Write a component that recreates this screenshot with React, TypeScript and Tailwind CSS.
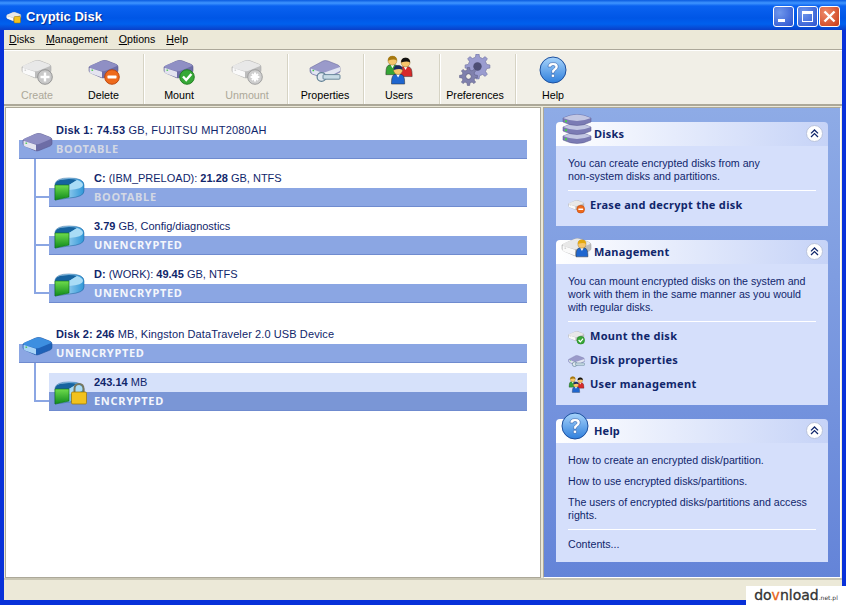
import React from 'react';

type Variant = 'purple' | 'gray' | 'blue';

const driveColors: Record<Variant, { top: string; side: string; front: string; edge: string }> = {
    purple: { top: '#8f8fc4', side: '#6d6da6', front: '#e4e4f0', edge: '#55558c' },
    gray: { top: '#e8e8e8', side: '#bdbdbd', front: '#fafafa', edge: '#a8a8a8' },
    blue: { top: '#3d8fe0', side: '#1f62b8', front: '#a9d4f7', edge: '#174f9c' },
};

// Isometric hard drive body, used by the toolbar and the tree
const DriveBody = ({ variant }: { variant: Variant }) => {
    const c = driveColors[variant];
    return (
        <g transform="translate(0 1.5) scale(1 0.88)">
            <path d="M1 13 L13 6.5 Q16 5 19 6 L28 10 Q30 11 30 13 L30 17 Q30 19 28 20 L17 25 Q15 26 13 25 L3 20 Q1 19 1 17 Z" fill={c.side} stroke={c.edge} strokeWidth="0.6" />
            <path d="M1.5 13 Q1.5 11.5 3 11 L13 6.5 Q16 5.2 19 6.3 L28 10 Q30 11 28.5 12.2 L17 17.5 Q15 18.4 13 17.6 L3 14.4 Q1.5 14 1.5 13 Z" fill={c.top} />
            <path d="M1.5 14 L14 18.5 L14 25 L3 20.4 Q1.5 19.6 1.5 18 Z" fill={c.front} />
            <rect x="3.5" y="16" width="1.6" height="1.4" fill={variant === 'gray' ? '#ccc' : '#3fc83f'} />
        </g>
    );
};

const Badge = ({ kind }: { kind: 'plus' | 'minus' | 'check' | 'stop' }) => {
    const fill = { plus: '#c9c9c9', minus: '#ee6a1c', check: '#37a837', stop: '#cfcfcf' }[kind];
    const ring = { plus: '#8f8f8f', minus: '#b8420a', check: '#1d7a1d', stop: '#9a9a9a' }[kind];
    return (
        <g>
            <circle cx="24" cy="23" r="7.3" fill={fill} stroke={ring} strokeWidth="0.9" />
            {kind === 'plus' && <path d="M24 18.5 V27.5 M19.5 23 H28.5" stroke="#fff" strokeWidth="2.4" />}
            {kind === 'minus' && <rect x="19.5" y="21.6" width="9" height="2.8" rx="0.6" fill="#fff" />}
            {kind === 'check' && <path d="M20 22.5 L23.2 26 L28.4 20" stroke="#fff" strokeWidth="2.4" fill="none" />}
            {kind === 'stop' && <path d="M21 20 L27 26 M27 20 L21 26 M24 18.6 V27.4 M19.6 23 H28.4" stroke="#fff" strokeWidth="2" />}
        </g>
    );
};

const DriveIcon = ({ variant, badge, size = 32 }: { variant: Variant; badge?: 'plus' | 'minus' | 'check' | 'stop'; size?: number }) => (
    <svg width={size} height={size} viewBox="0 0 32 32">
        <DriveBody variant={variant} />
        {badge && <Badge kind={badge} />}
    </svg>
);

const PropertiesIcon = ({ size = 32 }: { size?: number }) => (
    <svg width={size} height={size} viewBox="0 0 32 32">
        <path d="M1 14 L14 7 Q16 6 19 7 L29 11 Q31 12 31 14 V18 L17 25 L3 20 Q1 19 1 17 Z" fill="#9a9aca" stroke="#6c6ca0" strokeWidth="0.6" />
        <path d="M1.5 14.5 L14 19 L31 13 V17 L17 24 L3 19.5 Z" fill="#e2e6f2" />
        <rect x="3.5" y="15.8" width="1.6" height="1.4" fill="#3fc83f" />
        <circle cx="12.5" cy="23" r="4.4" fill="#dfe7ee" stroke="#5f7f94" strokeWidth="1.2" />
        <rect x="14" y="20.6" width="17" height="4.6" rx="1" fill="#c7dbe5" stroke="#5f7f94" strokeWidth="0.9" />
    </svg>
);

const Person = ({ x, y, shirt, hair }: { x: number; y: number; shirt: string; hair: string }) => (
    <g transform={`translate(${x} ${y})`}>
        <path d="M0 19 Q0 11 4 10.5 H10 Q14 11 14 19 V21 H0 Z" fill={shirt} stroke="#222" strokeWidth="0.5" />
        <path d="M5 10.5 L7 14 L9 10.5 Z" fill="#fff" />
        <circle cx="7" cy="6" r="4.8" fill="#f7c66b" stroke="#7a5a18" strokeWidth="0.4" />
        <path d="M2.2 6 Q2 1 7 1 Q12 1 11.8 6 Q9 3.6 2.2 6 Z" fill={hair} />
    </g>
);

const UsersIcon = ({ size = 30 }: { size?: number }) => (
    <svg width={size} height={size} viewBox="0 0 30 32">
        <Person x={1} y={0} shirt="#35a535" hair="#a5780f" />
        <Person x={15} y={2} shirt="#d62a2a" hair="#111" />
        <Person x={7} y={10} shirt="#1f66cf" hair="#1b2a63" />
    </svg>
);

// Builds a cog outline from its centre, radii and tooth count
const gearPath = (cx: number, cy: number, outer: number, inner: number, teeth: number) => {
    const pts: string[] = [];
    const step = (Math.PI * 2) / teeth;
    for (let i = 0; i < teeth; i++) {
        const a = i * step;
        [[-0.28, inner], [-0.16, outer], [0.16, outer], [0.28, inner]].forEach(([k, r]) => {
            const t = a + k * step;
            pts.push(`${(cx + Math.cos(t) * r).toFixed(2)} ${(cy + Math.sin(t) * r).toFixed(2)}`);
        });
    }
    return `M${pts.join(' L')} Z`;
};

const GearIcon = () => (
    <svg width="32" height="32" viewBox="0 0 32 32">
        <path d={gearPath(18.5, 12.5, 12.5, 9.5, 8)} fill="#9a9ccf" stroke="#6d6f9f" strokeWidth="0.6" />
        <circle cx="18.5" cy="12.5" r="4.2" fill="#4d4e75" />
        <path d={gearPath(9.5, 22.5, 9, 6.6, 8)} fill="#7f80ad" stroke="#5f6088" strokeWidth="0.6" />
        <circle cx="9.5" cy="22.5" r="2.8" fill="#f1efe7" stroke="#55557f" strokeWidth="0.8" />
    </svg>
);

const HelpIcon = ({ size = 28 }: { size?: number }) => (
    <svg width={size} height={size} viewBox="0 0 28 28">
        <defs>
            <linearGradient id={`help${size}`} x1="0" y1="0" x2="0" y2="1">
                <stop offset="0" stopColor="#a8d4fb" />
                <stop offset="1" stopColor="#2f7fdc" />
            </linearGradient>
        </defs>
        <circle cx="14" cy="14" r="13" fill={`url(#help${size})`} stroke="#1c4f9e" strokeWidth="1" />
        <path d="M9 11 Q9 6.5 14 6.5 Q19.2 6.5 19.2 10.8 Q19.2 13.2 16.6 14.4 Q15.4 15 15.4 17 H12.4 Q12.4 13.8 14.4 12.8 Q16 12 16 10.8 Q16 9.4 14 9.4 Q12.2 9.4 12.2 11 Z" fill="#fff" stroke="#1c4f9e" strokeWidth="0.5" />
        <rect x="12.4" y="18.3" width="3.1" height="3" rx="0.8" fill="#fff" stroke="#1c4f9e" strokeWidth="0.5" />
    </svg>
);

const PieIcon = ({ lock }: { lock?: boolean }) => (
    <svg width="34" height="28" viewBox="0 0 34 28">
        <defs>
            <linearGradient id="pieSide" x1="0" y1="0" x2="1" y2="0">
                <stop offset="0" stopColor="#d9f0fc" />
                <stop offset="1" stopColor="#2f97d8" />
            </linearGradient>
            <linearGradient id="pieGreen" x1="0" y1="0" x2="0" y2="1">
                <stop offset="0" stopColor="#6fdc4c" />
                <stop offset="1" stopColor="#0f8a1c" />
            </linearGradient>
        </defs>
        <path d="M1 9 Q2 3 15 3 Q30 3 30 10 V16 Q30 22 15 23 L1 25 Z" fill="url(#pieSide)" stroke="#1a5c99" strokeWidth="0.5" />
        <path d="M1 10 Q1 4 15 4 Q20 4 23 5 L15 10 Z" fill="#16639f" />
        <path d="M15 10 L23 5 Q29 7 29 10 Q29 14 15 15 Z" fill="#a9dcf6" />
        <path d="M1 10 L15 10 L15 22 L1 25 Z" fill="url(#pieGreen)" stroke="#0d6b14" strokeWidth="0.6" />
        {lock && (
            <g>
                <path d="M20.5 14 V10 Q20.5 5 25 5 Q29.5 5 29.5 10 V14" fill="none" stroke="#77775f" strokeWidth="2" />
                <rect x="17.5" y="13" width="15" height="12" rx="1.2" fill="#f2c21e" stroke="#9a7300" strokeWidth="0.7" />
            </g>
        )}
    </svg>
);

const StackIcon = () => (
    <svg width="32" height="32" viewBox="0 0 32 32">
        {[20, 11, 2].map((y) => (
            <g key={y} transform={`translate(2 ${y})`}>
                <path d="M0 4 Q14 -3 28 4 V8 Q14 15 0 8 Z" fill="#7b7bb4" stroke="#54548c" strokeWidth="0.5" />
                <path d="M0 4 Q14 -3 28 4 Q14 10 0 4 Z" fill="#c3c7e3" />
                <rect x="2" y="6.2" width="2" height="2" fill="#48d048" />
            </g>
        ))}
    </svg>
);

const ManagementIcon = () => (
    <svg width="32" height="32" viewBox="0 0 32 32">
        <DriveBody variant="gray" />
        <g transform="translate(15 7) scale(0.85)">
            <Person x={0} y={0} shirt="#1f66cf" hair="#e3a810" />
        </g>
    </svg>
);

const ToolButton = ({ label, width, disabled, children }: { label: string; width: string; disabled?: boolean; children: React.ReactNode }) => (
    <div className={`flex flex-col items-center h-[50px] ${width} ${disabled ? 'text-[#aca899]' : 'text-black'}`}>
        <div className="h-[32px] flex items-center justify-center">{children}</div>
        <span className="mt-[3px] leading-[13px] text-[10.7px]">{label}</span>
    </div>
);

const Sep = () => <div className="w-[2px] h-[50px] bg-[#d6d3c4] border-r border-white" />;

const Bar = ({ label, muted, selected, pad }: { label: string; muted?: boolean; selected?: boolean; pad: string }) => (
    <div className={`h-[19px] ${pad} flex items-center font-['Noto_Sans',sans-serif] font-bold text-[11px] tracking-[0.7px] border-b border-[#6f8bcf] ${selected ? 'bg-[#7a96d6] text-[#f4f6fc]' : 'bg-[#8ba6e3]'} ${muted ? 'text-[#d3d8e4]' : 'text-[#f4f6fc]'}`}>
        {label}
    </div>
);

const PartitionRow = ({ title, bar, muted, selected, lock, last }: { title: React.ReactNode; bar: string; muted?: boolean; selected?: boolean; lock?: boolean; last?: boolean }) => (
    <div className="flex h-[48px] ml-[28px]">
        {/* connector from the disk down to this partition */}
        <div className="w-[15px] flex flex-col">
            <div className="h-[39px] border-l-2 border-b-2 border-[#8ba6e3]" />
            {!last && <div className="flex-1 border-l-2 border-[#8ba6e3]" />}
        </div>
        <div className={`relative flex-1 flex flex-col justify-end h-[38px] self-end ${selected ? 'bg-[#d6e1fa]' : ''}`}>
            <div className="pl-[45px] leading-[19px] h-[19px]">{title}</div>
            <Bar label={bar} muted={muted} selected={selected} pad="pl-[45px]" />
            <div className="absolute left-[5px] top-[6px]">
                <PieIcon lock={lock} />
            </div>
        </div>
    </div>
);

const DiskRow = ({ title, bar, muted, variant }: { title: React.ReactNode; bar: string; muted?: boolean; variant: Variant }) => (
    <div className="relative ml-[13px]">
        <div className="pl-[37px] leading-[19px] h-[19px]">{title}</div>
        <Bar label={bar} muted={muted} pad="pl-[37px]" />
        <div className="absolute left-[3px] top-[6px]">
            <DriveIcon variant={variant} size={32} />
        </div>
    </div>
);

const TaskCard = ({ title, icon, iconBottom, children }: { title: string; icon: React.ReactNode; iconBottom: string; children: React.ReactNode }) => (
    <div>
        <div className="relative h-[24px] rounded-t-[4px] bg-gradient-to-r from-white to-[#c6d3f7] flex items-center pl-[38px] font-['Noto_Sans',sans-serif] font-bold text-[11px] tracking-[0.2px] text-[#10266b]">
            {title}
            <div className={`absolute left-[5px] ${iconBottom}`}>{icon}</div>
            <div className="absolute right-[5px] top-[3px] w-[17px] h-[17px] rounded-full bg-white border border-[#b9c3dc] flex items-center justify-center">
                <svg width="9" height="9" viewBox="0 0 9 9" fill="none" stroke="#10266b" strokeWidth="1.3">
                    <path d="M1 4.4 L4.5 1 L8 4.4 M1 8 L4.5 4.6 L8 8" />
                </svg>
            </div>
        </div>
        <div className="bg-[#d5dffb] px-[12px] pt-[11px] pb-[9px] text-[#10266b] text-[10.65px]">{children}</div>
    </div>
);

const TaskLink = ({ icon, children }: { icon: React.ReactNode; children: React.ReactNode }) => (
    <div className="flex items-center h-[24px] gap-[5px] font-['Noto_Sans',sans-serif] font-bold text-[11px] tracking-[0.3px] text-[#10266b]">
        <div className="w-[17px] h-[17px] flex items-center justify-center">{icon}</div>
        {children}
    </div>
);

export default function App() {
    return (
        <div className="relative w-[846px] h-[605px] overflow-hidden flex flex-col bg-[#0831d9] font-['Liberation_Sans',sans-serif] text-[11px] text-[#10266b]">
            {/* Title bar */}
            <div className="h-[30px] shrink-0 flex items-center pt-[3px] pl-[6px] pr-[6px] gap-[4px] bg-[linear-gradient(to_bottom,#0a5be0_0px,#3f95ff_3px,#0a62f0_6px,#0056e6_18px,#0060ee_24px,#0a3fc8_30px)]">
                <svg width="16" height="16" viewBox="0 0 32 32"><DriveBody variant="gray" /><rect x="16" y="15" width="13" height="13" rx="2" fill="#f2c21e" stroke="#9a7300" /></svg>
                <span className="flex-1 font-['Liberation_Sans',sans-serif] font-bold text-[13px] text-white [text-shadow:1px_1px_1px_#0a2a90]">Cryptic Disk</span>
                <div className="w-[21px] h-[21px] rounded-[3px] border border-white bg-[radial-gradient(circle_at_30%_30%,#6f97ec,#2a52cf)] flex items-end pl-[4px] pb-[4px]">
                    <div className="w-[7px] h-[3px] bg-white" />
                </div>
                <div className="w-[21px] h-[21px] -ml-[1px] rounded-[3px] border border-white bg-[radial-gradient(circle_at_30%_30%,#6f97ec,#2a52cf)] flex items-center justify-center">
                    <div className="w-[11px] h-[11px] border border-white border-t-[3px]" />
                </div>
                <div className="w-[21px] h-[21px] -ml-[3px] rounded-[3px] border border-white bg-[radial-gradient(circle_at_30%_30%,#ee8a6a,#c93a16)] flex items-center justify-center">
                    <svg width="13" height="13" viewBox="0 0 13 13" stroke="#fff" strokeWidth="2.4"><path d="M1.5 1.5 L11.5 11.5 M11.5 1.5 L1.5 11.5" /></svg>
                </div>
            </div>

            <div className="flex-1 min-h-0 mx-[4px] mb-[5px] flex flex-col bg-[#ece9d8] text-black">
                {/* Menu bar */}
                <div className="h-[20px] shrink-0 flex items-center gap-[11px] pl-[5px] text-[10.6px] border-b border-[#aca899]">
                    <span><u>D</u>isks</span>
                    <span><u>M</u>anagement</span>
                    <span><u>O</u>ptions</span>
                    <span><u>H</u>elp</span>
                </div>

                {/* Toolbar */}
                <div className="h-[56px] shrink-0 flex items-start pt-[3px] border-t border-white border-b-2 border-b-[#aca899] bg-[#f1efe7]">
                    <ToolButton label="Create" width="w-[66px]" disabled><DriveIcon variant="gray" badge="plus" /></ToolButton>
                    <ToolButton label="Delete" width="w-[67px] mr-[6px]"><DriveIcon variant="purple" badge="minus" /></ToolButton>
                    <Sep />
                    <ToolButton label="Mount" width="w-[68px]"><DriveIcon variant="purple" badge="check" /></ToolButton>
                    <ToolButton label="Unmount" width="w-[68px] mr-[6px]" disabled><DriveIcon variant="gray" badge="stop" /></ToolButton>
                    <Sep />
                    <ToolButton label="Properties" width="w-[72px] mr-[2px]"><PropertiesIcon /></ToolButton>
                    <Sep />
                    <ToolButton label="Users" width="w-[68px] mr-[6px]"><UsersIcon /></ToolButton>
                    <Sep />
                    <ToolButton label="Preferences" width="w-[68px] mr-[6px]"><GearIcon /></ToolButton>
                    <Sep />
                    <ToolButton label="Help" width="w-[72px]"><HelpIcon /></ToolButton>
                </div>

                {/* Content */}
                <div className="flex-1 min-h-0 flex gap-[2px] px-[1px] pt-[1px]">
                    <div className="w-[536px] bg-white border border-[#aca899] pt-[13px] pr-[13px] text-[#10266b]">
                        <DiskRow variant="purple" bar="BOOTABLE" muted title={<span className="tracking-[0.2px]"><b>Disk 1: 74.53</b> GB, FUJITSU MHT2080AH</span>} />
                        <PartitionRow bar="BOOTABLE" muted title={<><b>C:</b> (IBM_PRELOAD): <b>21.28</b> GB, NTFS</>} />
                        <PartitionRow bar="UNENCRYPTED" title={<><b>3.79</b> GB, Config/diagnostics</>} />
                        <PartitionRow bar="UNENCRYPTED" last title={<><b>D:</b> (WORK): <b>49.45</b> GB, NTFS</>} />
                        <div className="h-[22px]" />
                        <DiskRow variant="blue" bar="UNENCRYPTED" title={<span className="tracking-[0.1px]"><b>Disk 2: 246</b> MB, Kingston DataTraveler 2.0 USB Device</span>} />
                        <PartitionRow bar="ENCRYPTED" selected lock last title={<><b>243.14</b> MB</>} />
                    </div>

                    <div className="flex-1 border border-[#aca899] border-r-white border-b-white bg-[linear-gradient(to_bottom,#8eabe6,#6484d8)] px-[12px] pt-[14px] flex flex-col gap-[14px]">
                        <TaskCard title="Disks" icon={<StackIcon />} iconBottom="bottom-[2px]">
                            <p className="leading-[13px]">You can create encrypted disks from any<br />non-system disks and partitions.</p>
                            <div className="h-px bg-white mt-[7px] mb-[2px]" />
                            <TaskLink icon={<DriveIcon variant="gray" badge="minus" size={17} />}>Erase and decrypt the disk</TaskLink>
                        </TaskCard>
                        <TaskCard title="Management" icon={<ManagementIcon />} iconBottom="bottom-[0px]">
                            <p className="leading-[13px]">You can mount encrypted disks on the system and<br />work with them in the same manner as you would<br />with regular disks.</p>
                            <div className="h-px bg-white mt-[7px] mb-[2px]" />
                            <TaskLink icon={<DriveIcon variant="gray" badge="check" size={17} />}>Mount the disk</TaskLink>
                            <TaskLink icon={<PropertiesIcon size={17} />}>Disk properties</TaskLink>
                            <TaskLink icon={<UsersIcon size={17} />}>User management</TaskLink>
                        </TaskCard>
                        <TaskCard title="Help" icon={<HelpIcon size={28} />} iconBottom="bottom-[3px]">
                            <p className="leading-[13px]">How to create an encrypted disk/partition.</p>
                            <p className="leading-[13px] mt-[8px]">How to use encrypted disks/partitions.</p>
                            <p className="leading-[13px] mt-[8px]">The users of encrypted disks/partitions and access<br />rights.</p>
                            <div className="h-px bg-white mt-[7px] mb-[8px]" />
                            <p className="leading-[13px] mb-[2px]">Contents...</p>
                        </TaskCard>
                    </div>
                </div>

                {/* Status bar */}
                <div className="h-[22px] shrink-0 border-t-2 border-[#c9c6b4] bg-[#ece9d8]" />
            </div>

            {/* download.net.pl watermark */}
            <div className="absolute right-0 bottom-0 w-[100px] h-[19px] bg-white flex items-baseline justify-center font-['DejaVu_Sans',sans-serif] text-[14px] leading-[19px] text-[#333] [-webkit-text-stroke:0.3px_#333]">
                do<span className="text-[#e8641b] [-webkit-text-stroke:0.3px_#e8641b]">v</span>nload<span className="text-[6px] [-webkit-text-stroke:0px]">.net.pl</span>
            </div>
        </div>
    );
}
